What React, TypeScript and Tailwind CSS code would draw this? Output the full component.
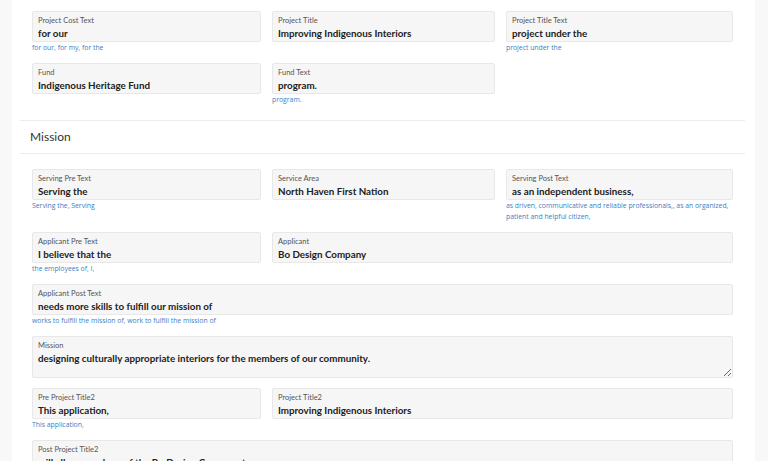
const font = { fontFamily: 'Lato, "Open Sans", sans-serif' }
const helpFont = { fontFamily: '"Open Sans", "Noto Sans", sans-serif' }

function Field({
  label,
  value,
  help,
  className = '',
}: {
  label: string
  value: string
  help?: string
  className?: string
}) {
  return (
    <div className={className}>
      <div className="h-[31px] rounded-[2px] border border-[#e8e8e8] bg-[#f6f6f6] px-[5px] pt-[4px]">
        <div className="text-[7.5px] leading-[10px] text-[#555]">{label}</div>
        <div className="text-[9.8px] font-bold leading-[14px] text-[#222]">{value}</div>
      </div>
      <div style={helpFont} className="mb-[10px] min-h-[11px] text-[6.85px] leading-[11px] text-[#3d80c4]">
        {help}
      </div>
    </div>
  )
}

export default function App() {
  return (
    <div style={font} className="flex h-screen overflow-hidden bg-[#f8f8f8]">
      <div className="ml-[12px] w-[743px] bg-white">
        <div className="pt-[11px] pl-[20px] pr-[22px]">
          <div className="grid grid-cols-[229px_223px_1fr] gap-x-[11px]">
            <Field label="Project Cost Text" value="for our" help="for our, for my, for the" />
            <Field label="Project Title" value="Improving Indigenous Interiors" />
            <Field label="Project Title Text" value="project under the" help="project under the" />
            <Field label="Fund" value="Indigenous Heritage Fund" />
            <Field label="Fund Text" value="program." help="program." />
          </div>
        </div>
        <div className="mt-[5px] ml-[8px] mr-[10px] border-t border-[#ececec]" />
        <div className="pt-[8px] pb-[8px] pl-[18px] text-[12px] leading-[16px] text-[#333]">Mission</div>
        <div className="ml-[8px] mr-[10px] border-t border-[#ececec]" />
        <div className="pt-[15px] pl-[20px] pr-[22px]">
          <div className="grid grid-cols-[229px_223px_1fr] gap-x-[11px]">
            <Field label="Serving Pre Text" value="Serving the" help="Serving the, Serving" />
            <Field label="Service Area" value="North Haven First Nation" />
            <Field
              label="Serving Post Text"
              value="as an independent business,"
              help="as driven, communicative and reliable professionals,, as an organized, patient and helpful citizen,"
            />
            <Field label="Applicant Pre Text" value="I believe that the" help="the employees of, I," />
            <Field label="Applicant" value="Bo Design Company" className="col-span-2" />
            <Field
              label="Applicant Post Text"
              value="needs more skills to fulfill our mission of"
              help="works to fulfill the mission of, work to fulfill the mission of"
              className="col-span-3"
            />
            <div className="col-span-3 mb-[10px] h-[42px] resize-y overflow-hidden rounded-[2px] border border-[#e8e8e8] bg-[#f6f6f6] px-[5px] pt-[4px]">
              <div className="text-[7.5px] leading-[10px] text-[#555]">Mission</div>
              <div className="text-[9.8px] font-bold leading-[14px] text-[#222]">
                designing culturally appropriate interiors for the members of our community.
              </div>
            </div>
            <Field label="Pre Project Title2" value="This application," help="This application," />
            <Field label="Project Title2" value="Improving Indigenous Interiors" className="col-span-2" />
            <Field
              label="Post Project Title2"
              value="will allow members of the Bo Design Company to"
              className="col-span-3"
            />
          </div>
        </div>
      </div>
    </div>
  )
}
